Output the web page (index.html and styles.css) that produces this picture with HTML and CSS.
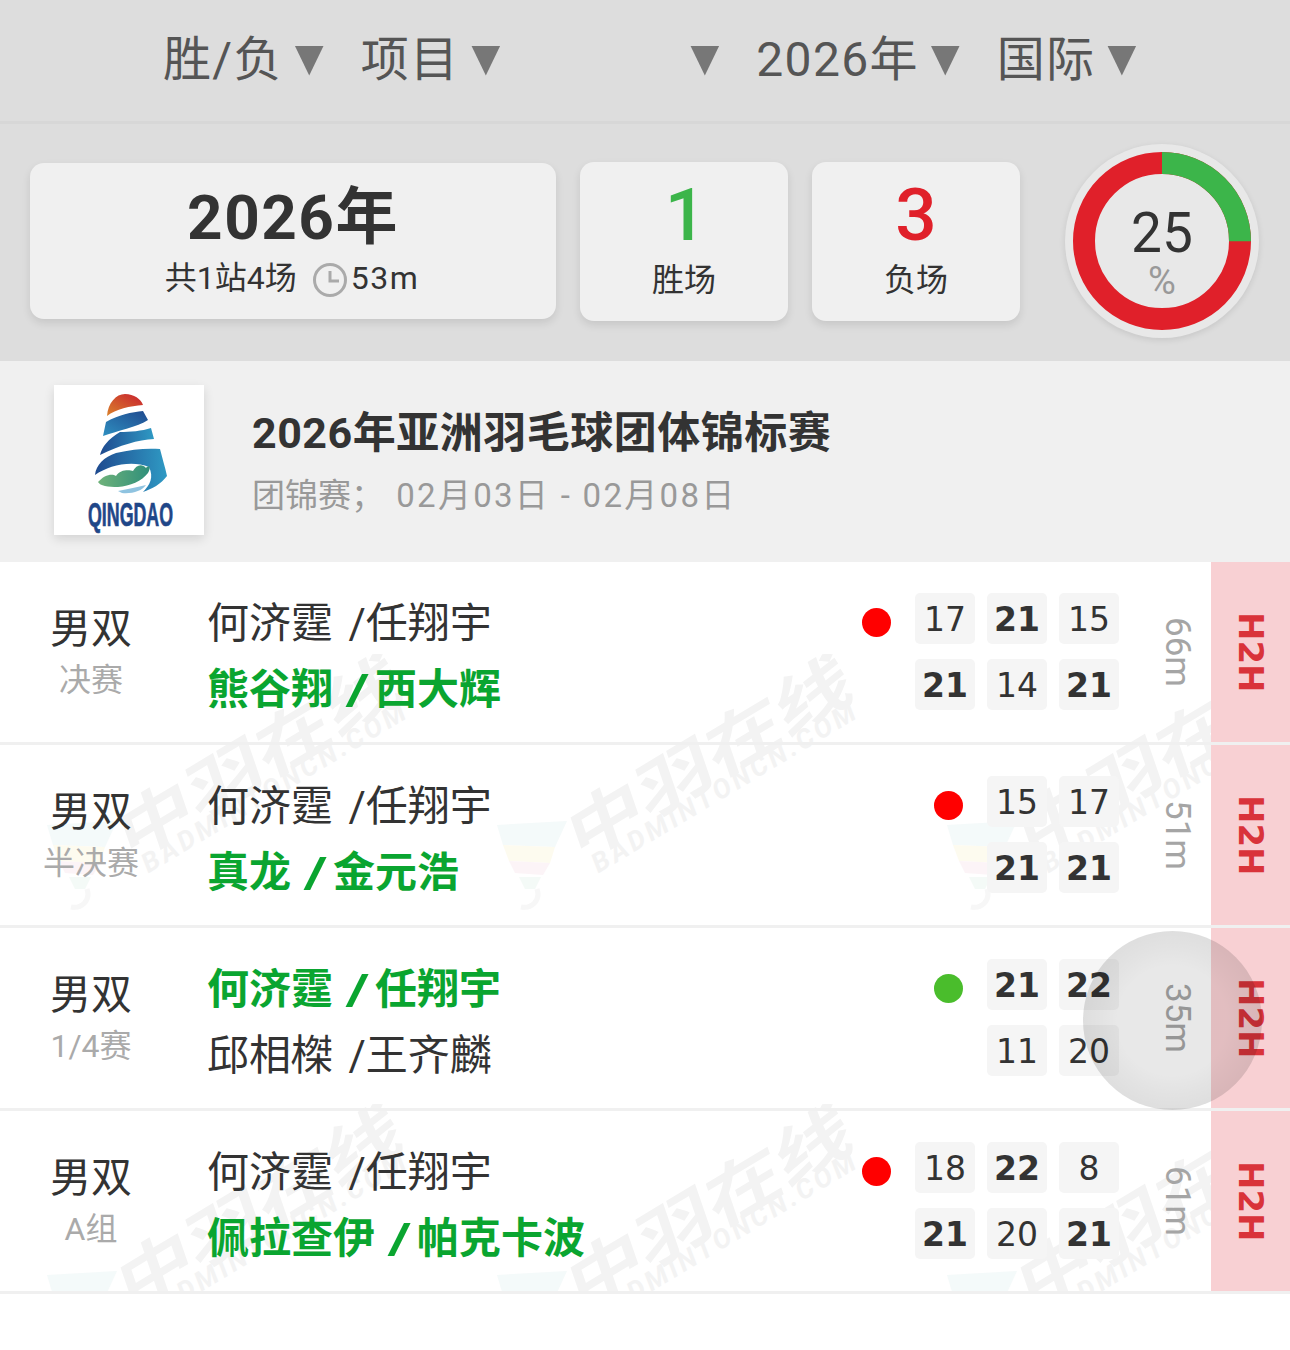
FILE: index.html
```html
<!DOCTYPE html>
<html lang="zh">
<head>
<meta charset="utf-8">
<title>胜负统计</title>
<link rel="stylesheet" href="styles.css">
</head>
<body>
<header class="filters">
  <div class="filter"><span>胜/负</span><i class="tri"></i></div>
  <div class="filter"><span>项目</span><i class="tri"></i></div>
  <div class="filter filter-empty"><i class="tri"></i></div>
  <div class="filter"><span>2026年</span><i class="tri"></i></div>
  <div class="filter"><span>国际</span><i class="tri"></i></div>
</header>
<section class="stats">
  <div class="card card-main">
    <div class="year">2026年</div>
    <div class="meta"><span>共1站4场</span>
      <svg class="clock" viewBox="0 0 36 36"><circle cx="18" cy="18" r="15.5" fill="none" stroke="#aaa" stroke-width="3"/><path d="M18 9v10h9" fill="none" stroke="#aaa" stroke-width="3"/></svg>
      <span class="dur-total">53m</span></div>
  </div>
  <div class="card card-num"><div class="num win">1</div><div class="lbl">胜场</div></div>
  <div class="card card-num"><div class="num lose">3</div><div class="lbl">负场</div></div>
  <div class="ring">
    <svg viewBox="0 0 194 194" class="ring-svg">
      <circle cx="97" cy="97" r="78" fill="none" stroke="#e0202a" stroke-width="22"/>
      <circle cx="97" cy="97" r="78" fill="none" stroke="#3cb54a" stroke-width="22" stroke-dasharray="122.5 490" transform="rotate(-90 97 97)"/>
    </svg>
    <div class="ring-text"><div class="pct">25</div><div class="pct-unit">%</div></div>
  </div>
</section>
<section class="event">
  <div class="logo">
    <svg viewBox="0 0 150 150" width="150" height="150">
      <defs>
        <linearGradient id="sun" x1="0" y1="1" x2="1" y2="0"><stop offset="0" stop-color="#d9822b"/><stop offset="1" stop-color="#c8202f"/></linearGradient>
        <linearGradient id="rib" x1="0" y1="1" x2="1" y2="0"><stop offset="0" stop-color="#2f8fc0"/><stop offset="1" stop-color="#1f4a8f"/></linearGradient>
        <linearGradient id="rib2" x1="0" y1="0" x2="1" y2="0"><stop offset="0" stop-color="#1f4a8f"/><stop offset="1" stop-color="#2f9ac4"/></linearGradient>
        <linearGradient id="hill" x1="0" y1="0" x2="1" y2="0"><stop offset="0" stop-color="#6fb27a"/><stop offset="1" stop-color="#2f8f7a"/></linearGradient>
      </defs>
      <path d="M53 31C54 18 62 9 71 9C80 9 87 14 89 20C76 21 62 24 53 31Z" fill="url(#sun)"/>
      <path d="M52 37C64 30 78 27 89 26L94 35C84 42 62 46 49 51Z" fill="url(#rib)"/>
      <path d="M66 47C76 47 88 46 97 43L100 54C84 55 66 60 46 70C48 62 54 54 66 47Z" fill="url(#rib2)"/>
      <path d="M41 90C42 80 50 72 62 68C78 64 94 63 106 64C108 72 111 82 113 91C107 99 98 104 89 107C96 100 100 92 95 82C78 75 55 80 41 90Z" fill="url(#rib2)"/>
      <path d="M44 97C50 90 58 88 62 91C66 84 76 85 79 86C82 80 88 78 92 83C94 80 98 80 94 88C88 96 76 101 64 102C54 102 46 101 44 97Z" fill="url(#hill)"/>
      <path d="M64 106C74 104 84 102 92 100C88 106 78 109 68 108Z" fill="#8fc3e0"/>
      <text x="34" y="141" class="logo-text" textLength="85" lengthAdjust="spacingAndGlyphs">QINGDAO</text>
    </svg>
  </div>
  <div class="event-info">
    <div class="event-title">2026年亚洲羽毛球团体锦标赛</div>
    <div class="event-sub">团锦赛；&nbsp;<span class="event-date">02月03日 - 02月08日</span></div>
  </div>
</section>
<main class="list">
  <div class="watermarks">
    <div class="tile"><div class="wm-cn">中羽在线</div><div class="wm-en">BADMINTONCN.COM</div><svg class="wm-funnel" viewBox="0 0 75 95"><path d="M2 10L72 6L60 32L8 30Z" fill="#eef7f7"/><path d="M8 30L60 32L55 48L14 46Z" fill="#fdf9e6"/><path d="M14 46L55 48L48 60L20 58Z" fill="#fbeef3"/><path d="M24 62L46 62L40 74L30 74Z" fill="#eef7f2"/><path d="M42 74C46 86 36 94 26 92" fill="none" stroke="#f2f2f2" stroke-width="5"/></svg></div>
    <div class="tile"><div class="wm-cn">中羽在线</div><div class="wm-en">BADMINTONCN.COM</div><svg class="wm-funnel" viewBox="0 0 75 95"><path d="M2 10L72 6L60 32L8 30Z" fill="#eef7f7"/><path d="M8 30L60 32L55 48L14 46Z" fill="#fdf9e6"/><path d="M14 46L55 48L48 60L20 58Z" fill="#fbeef3"/><path d="M24 62L46 62L40 74L30 74Z" fill="#eef7f2"/><path d="M42 74C46 86 36 94 26 92" fill="none" stroke="#f2f2f2" stroke-width="5"/></svg></div>
    <div class="tile"><div class="wm-cn">中羽在线</div><div class="wm-en">BADMINTONCN.COM</div><svg class="wm-funnel" viewBox="0 0 75 95"><path d="M2 10L72 6L60 32L8 30Z" fill="#eef7f7"/><path d="M8 30L60 32L55 48L14 46Z" fill="#fdf9e6"/><path d="M14 46L55 48L48 60L20 58Z" fill="#fbeef3"/><path d="M24 62L46 62L40 74L30 74Z" fill="#eef7f2"/><path d="M42 74C46 86 36 94 26 92" fill="none" stroke="#f2f2f2" stroke-width="5"/></svg></div>
    <div class="tile"><div class="wm-cn">中羽在线</div><div class="wm-en">BADMINTONCN.COM</div><svg class="wm-funnel" viewBox="0 0 75 95"><path d="M2 10L72 6L60 32L8 30Z" fill="#eef7f7"/><path d="M8 30L60 32L55 48L14 46Z" fill="#fdf9e6"/><path d="M14 46L55 48L48 60L20 58Z" fill="#fbeef3"/><path d="M24 62L46 62L40 74L30 74Z" fill="#eef7f2"/><path d="M42 74C46 86 36 94 26 92" fill="none" stroke="#f2f2f2" stroke-width="5"/></svg></div>
    <div class="tile"><div class="wm-cn">中羽在线</div><div class="wm-en">BADMINTONCN.COM</div><svg class="wm-funnel" viewBox="0 0 75 95"><path d="M2 10L72 6L60 32L8 30Z" fill="#eef7f7"/><path d="M8 30L60 32L55 48L14 46Z" fill="#fdf9e6"/><path d="M14 46L55 48L48 60L20 58Z" fill="#fbeef3"/><path d="M24 62L46 62L40 74L30 74Z" fill="#eef7f2"/><path d="M42 74C46 86 36 94 26 92" fill="none" stroke="#f2f2f2" stroke-width="5"/></svg></div>
    <div class="tile"><div class="wm-cn">中羽在线</div><div class="wm-en">BADMINTONCN.COM</div><svg class="wm-funnel" viewBox="0 0 75 95"><path d="M2 10L72 6L60 32L8 30Z" fill="#eef7f7"/><path d="M8 30L60 32L55 48L14 46Z" fill="#fdf9e6"/><path d="M14 46L55 48L48 60L20 58Z" fill="#fbeef3"/><path d="M24 62L46 62L40 74L30 74Z" fill="#eef7f2"/><path d="M42 74C46 86 36 94 26 92" fill="none" stroke="#f2f2f2" stroke-width="5"/></svg></div>
  </div>

  <article class="row">
    <div class="type"><div class="type-main">男双</div><div class="type-sub">决赛</div></div>
    <div class="names"><div class="name">何济霆 /任翔宇</div><div class="name winner">熊谷翔 <span class="sl">/</span>西大辉</div></div>
    <i class="dot dot-lose"></i>
    <div class="scores scores-3">
      <b class="s">17</b><b class="s w">21</b><b class="s">15</b>
      <b class="s w">21</b><b class="s">14</b><b class="s w">21</b>
    </div>
    <div class="dur">66m</div>
    <div class="h2h">H2H</div>
  </article>

  <article class="row">
    <div class="type"><div class="type-main">男双</div><div class="type-sub">半决赛</div></div>
    <div class="names"><div class="name">何济霆 /任翔宇</div><div class="name winner">真龙 <span class="sl">/</span>金元浩</div></div>
    <i class="dot dot-lose"></i>
    <div class="scores scores-2">
      <b class="s">15</b><b class="s">17</b>
      <b class="s w">21</b><b class="s w">21</b>
    </div>
    <div class="dur">51m</div>
    <div class="h2h">H2H</div>
  </article>

  <article class="row">
    <div class="type"><div class="type-main">男双</div><div class="type-sub">1/4赛</div></div>
    <div class="names"><div class="name winner">何济霆 <span class="sl">/</span>任翔宇</div><div class="name">邱相榤 /王齐麟</div></div>
    <i class="dot dot-win"></i>
    <div class="scores scores-2">
      <b class="s w">21</b><b class="s w">22</b>
      <b class="s">11</b><b class="s">20</b>
    </div>
    <div class="dur">35m</div>
    <div class="h2h">H2H</div>
  </article>

  <article class="row">
    <div class="type"><div class="type-main">男双</div><div class="type-sub">A组</div></div>
    <div class="names"><div class="name">何济霆 /任翔宇</div><div class="name winner">佩拉查伊 <span class="sl">/</span>帕克卡波</div></div>
    <i class="dot dot-lose"></i>
    <div class="scores scores-3">
      <b class="s">18</b><b class="s w">22</b><b class="s">8</b>
      <b class="s w">21</b><b class="s">20</b><b class="s w">21</b>
    </div>
    <div class="dur">61m</div>
    <div class="h2h">H2H</div>
  </article>

  <div class="ripple"></div>
</main>
</body>
</html>
```
FILE: styles.css
```css
* { box-sizing: border-box; }
html, body { margin: 0; padding: 0; }
body {
  width: 1290px;
  min-height: 1350px;
  background: #fff;
  color: #333;
  font-family: Roboto, "Noto Sans CJK SC", sans-serif;
}

/* filter bar */
.filters {
  height: 124px;
  background: #ddd;
  border-bottom: 3px solid #d7d7d7;
  display: flex;
  align-items: center;
  padding: 0 0 2px 163px;
  gap: 37px;
}
.filter {
  display: flex;
  align-items: center;
  gap: 12px;
  font-size: 48px;
  line-height: 60px;
  letter-spacing: 1.3px;
  color: #555;
}
.filter-empty { margin-left: 153px; }
.tri {
  display: block;
  width: 29px;
  height: 30px;
  margin-top: 2px;
  background: #777;
  clip-path: polygon(0 0, 100% 0, 50% 100%);
}

/* stats */
.stats {
  height: 237px;
  background: #ddd;
  display: flex;
  align-items: flex-start;
  padding: 38px 0 0 30px;
}
.card {
  background: #f0f0f0;
  border-radius: 14px;
  box-shadow: 0 4px 8px rgba(0, 0, 0, .1);
  text-align: center;
}
.card-main {
  width: 526px;
  height: 156px;
  margin: 1px 24px 0 0;
  padding-top: 16px;
}
.year {
  font-size: 62px;
  line-height: 78px;
  font-weight: 700;
  letter-spacing: 1.5px;
  color: #333;
}
.meta {
  display: flex;
  justify-content: center;
  align-items: center;
  gap: 3px;
  font-size: 32px;
  line-height: 44px;
  color: #333;
  margin-top: -1px;
  padding-right: 2px;
}
.dur-total { letter-spacing: 1.5px; }
.clock { width: 36px; height: 36px; margin: 3px 0 0 12px; display: block; }
.card-num {
  width: 208px;
  height: 159px;
  margin-right: 24px;
  padding-top: 13px;
}
.num { font-size: 73px; line-height: 80px; font-weight: 500; }
.win { color: #3cb54a; padding-left: 3px; }
.lose { color: #e0202a; }
.lbl { font-size: 32px; line-height: 44px; margin-top: 3px; color: #333; }
.ring {
  position: relative;
  width: 194px;
  height: 194px;
  margin: -18px 0 0 21px;
  border-radius: 50%;
  background: #e8e8e8;
  box-shadow: 0 2px 6px rgba(0, 0, 0, .1);
}
.ring-svg { display: block; width: 194px; height: 194px; }
.ring-text {
  position: absolute;
  inset: 0;
  display: flex;
  flex-direction: column;
  align-items: center;
  padding-top: 60px;
}
.pct { font-size: 55px; line-height: 58px; color: #333; }
.pct-unit { font-size: 38px; line-height: 38px; color: #999; }

/* event */
.event {
  height: 201px;
  background: #f0f0f0;
  display: flex;
  align-items: flex-start;
  padding: 24px 0 0 54px;
}
.logo {
  width: 150px;
  height: 150px;
  background: #fff;
  box-shadow: 0 4px 10px rgba(0, 0, 0, .12);
  flex: none;
}
.logo svg { display: block; }
.logo-text {
  font-family: "Liberation Sans", sans-serif;
  font-weight: 700;
  font-size: 33px;
  fill: #1f4788;
  stroke: #1f4788;
  stroke-width: .7px;
}
.event-info { margin-left: 48px; padding-top: 19px; }
.event-title { font-size: 43px; line-height: 58px; font-weight: 700; color: #333; letter-spacing: .5px; }
.event-sub { font-size: 33px; line-height: 46px; margin-top: 11px; color: #999; }
.event-date { letter-spacing: 2.3px; margin-left: 4px; }

/* match list */
.list { position: relative; overflow: hidden; background: #fff; }
.watermarks {
  position: absolute;
  inset: 0;
  padding: 98px 0 0 45px;
  display: grid;
  grid-template-columns: repeat(3, 450px);
  grid-auto-rows: 450px;
  overflow: hidden;
}
.tile { position: relative; }
.wm-cn, .wm-en {
  position: absolute;
  white-space: nowrap;
  color: #f3f3f3;
  font-weight: 700;
}
.wm-cn {
  left: 50px;
  top: 54px;
  width: 330px;
  font-size: 72px;
  line-height: 90px;
  text-align: center;
  transform: rotate(-31deg) skewX(-12deg) scale(1.12, .88);
}
.wm-en {
  left: 70px;
  top: 110px;
  width: 320px;
  font-size: 27px;
  line-height: 34px;
  font-style: italic;
  text-align: center;
  letter-spacing: 3.5px;
  transform: rotate(-31deg);
}
.wm-funnel { position: absolute; left: 0; top: 155px; width: 75px; height: 95px; opacity: .6; }

.row {
  position: relative;
  height: 183px;
  border-bottom: 3px solid #f0f0f0;
  display: flex;
  align-items: center;
}
.type { width: 182px; flex: none; text-align: center; }
.type-main { font-size: 41px; line-height: 52px; color: #333; }
.type-sub { font-size: 32px; line-height: 44px; color: #aaa; margin-top: 3px; }
.names { flex: 1; padding: 10px 0 0 25px; }
.name { font-size: 42px; line-height: 66px; color: #333; white-space: nowrap; word-spacing: 5px; }
.winner { color: #0aa530; font-weight: 700; word-spacing: 7px; }
.sl {
  display: inline-block;
  margin-right: 9px;
  transform: scaleX(1.5);
}
.dot {
  display: block;
  width: 29px;
  height: 29px;
  border-radius: 50%;
  margin: -60px 24px 0 0;
  flex: none;
}
.dot-lose { background: #f00; }
.dot-win { background: #4abd2c; }
.scores {
  display: grid;
  grid-auto-rows: 51px;
  gap: 15px 12px;
  flex: none;
  margin-bottom: 2px;
}
.scores-3 { grid-template-columns: repeat(3, 60px); }
.scores-2 { grid-template-columns: repeat(2, 60px); }
.s {
  display: flex;
  align-items: center;
  justify-content: center;
  padding-top: 2px;
  background: #f5f5f5;
  border-radius: 5px;
  font-family: "DejaVu Sans", sans-serif;
  font-weight: 400;
  font-size: 33px;
  color: #333;
}
.s.w { font-weight: 700; }
.dur {
  width: 92px;
  flex: none;
  writing-mode: vertical-rl;
  font-size: 35px;
  line-height: 40px;
  color: #a5a5a5;
  display: flex;
  align-items: center;
  padding-left: 24px;
}
.h2h {
  width: 79px;
  height: 100%;
  flex: none;
  background: #f8d0d3;
  color: #d9333a;
  writing-mode: vertical-rl;
  font-family: "DejaVu Sans", sans-serif;
  font-weight: 700;
  font-size: 34px;
  display: flex;
  align-items: center;
  justify-content: center;
}
.ripple {
  position: absolute;
  left: 1083px;
  top: 369px;
  width: 179px;
  height: 179px;
  border-radius: 50%;
  background: radial-gradient(circle, rgba(0,0,0,.09) 0, rgba(0,0,0,.09) 43%, rgba(0,0,0,.11) 56%, rgba(0,0,0,.14) 80%, rgba(0,0,0,.15) 100%);
}
```
